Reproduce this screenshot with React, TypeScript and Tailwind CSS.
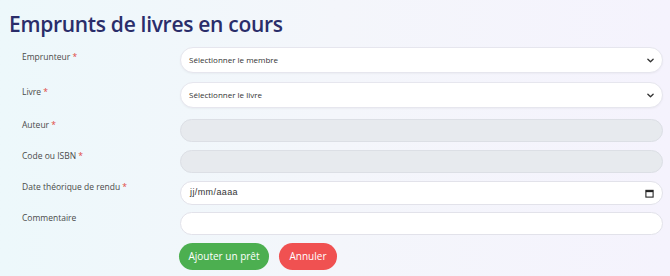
import React from "react";

const Label = ({ text, req = true, pt = "pt-0" }: { text: string; req?: boolean; pt?: string }) => (
  <div className={`w-[180px] shrink-0 pl-[22px] text-[8.5px] leading-[12px] text-[#4a4a4a] ${pt}`}>
    {text}
    {req && <span className="text-[#e0463f]"> *</span>}
  </div>
);

const Chevron = () => (
  <svg width="7" height="7" viewBox="0 0 16 16" className="text-[#333]">
    <path d="M2 5l6 6 6-6" fill="none" stroke="currentColor" strokeWidth="3" strokeLinecap="round" strokeLinejoin="round" />
  </svg>
);

const CalendarIcon = () => (
  <svg width="9" height="9" viewBox="0 0 10 10">
    <rect x="1" y="1.5" width="8" height="7.5" fill="none" stroke="#222" strokeWidth="1.2" />
    <rect x="1" y="1.5" width="8" height="2" fill="#222" />
  </svg>
);

export default function App() {
  return (
    <div
      className="w-[670px] h-[276px] overflow-hidden bg-gradient-to-r from-[#edf8fb] via-[#f4f6fb] to-[#f5f3fd]"
      style={{ fontFamily: '"Open Sans", sans-serif' }}
    >
      <h1 className="pl-[9px] pt-[10px] text-[21px] leading-[28px] font-semibold text-[#2a2d6a] tracking-[-0.3px]">
        Emprunts de livres en cours
      </h1>
      <div className="flex flex-col pr-[7px]">
        <div className="flex items-start mt-[9px]">
          <Label text="Emprunteur" pt="pt-[3.5px]" />
          <div className="flex-1 h-[26px] rounded-full bg-white border border-[#e6e6ee] flex items-center justify-between pl-[8px] pr-[8px] text-[8px] text-[#333] shadow-[0_1px_2px_rgba(0,0,0,0.04)]">
            <span>Sélectionner le membre</span>
            <Chevron />
          </div>
        </div>
        <div className="flex items-start mt-[9px]">
          <Label text="Livre" pt="pt-[3.5px]" />
          <div className="flex-1 h-[26px] rounded-full bg-white border border-[#e6e6ee] flex items-center justify-between pl-[8px] pr-[8px] text-[8px] text-[#333] shadow-[0_1px_2px_rgba(0,0,0,0.04)]">
            <span>Sélectionner le livre</span>
            <Chevron />
          </div>
        </div>
        <div className="flex items-start mt-[11px]">
          <Label text="Auteur" />
          <div className="flex-1 h-[23px] rounded-full bg-[#e7eaee] border border-[#dcdfe5]" />
        </div>
        <div className="flex items-start mt-[8px]">
          <Label text="Code ou ISBN" />
          <div className="flex-1 h-[23px] rounded-full bg-[#e7eaee] border border-[#dcdfe5]" />
        </div>
        <div className="flex items-start mt-[8px]">
          <Label text="Date théorique de rendu" />
          <div
            className="flex-1 h-[24px] rounded-full bg-white border border-[#e2e2ea] flex items-center justify-between pl-[9px] pr-[8px] text-[9px] text-[#333] tracking-[0.4px]"
            style={{ fontFamily: '"Liberation Sans", Arial, sans-serif' }}
          >
            <span>jj/mm/aaaa</span>
            <CalendarIcon />
          </div>
        </div>
        <div className="flex items-start mt-[7px]">
          <Label text="Commentaire" req={false} />
          <div className="flex-1 h-[23px] rounded-full bg-white border border-[#e2e2ea]" />
        </div>
        <div className="flex items-center mt-[8px] pl-[179px] gap-[10px]">
          <button className="h-[27px] w-[90px] rounded-full bg-[#4caf50] text-white text-[10px]">
            Ajouter un prêt
          </button>
          <button className="h-[27px] w-[58px] rounded-full bg-[#f05151] text-white text-[10px]">
            Annuler
          </button>
        </div>
      </div>
    </div>
  );
}
